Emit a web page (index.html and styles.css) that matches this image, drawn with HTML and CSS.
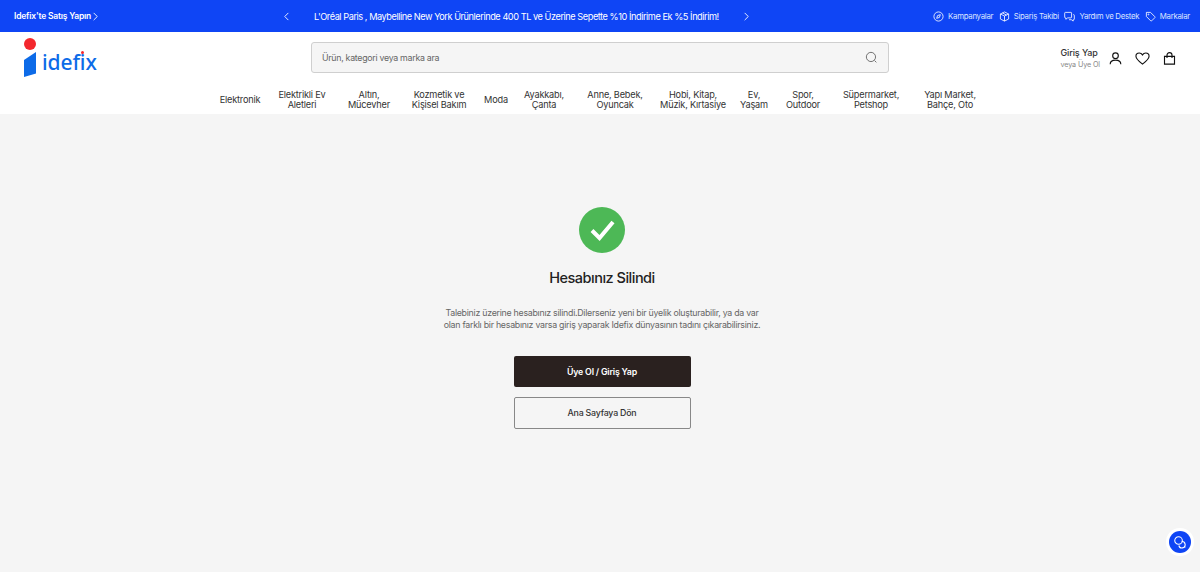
FILE: index.html
```html
<!DOCTYPE html>
<html lang="tr">
<head>
<meta charset="utf-8">
<title>Hesabınız Silindi</title>
<link rel="stylesheet" href="styles.css">
</head>
<body>
<div class="topbar">
  <a class="sell">Idefix'te Satış Yapın
    <svg class="chev" viewBox="0 0 8 10"><path d="M2.500 1l4 4-4 4"/></svg>
  </a>
  <div class="promo">
    <svg class="chev" viewBox="0 0 8 10"><path d="M5.500 1l-4 4 4 4"/></svg>
    <span class="promo-text">L'Oréal Paris , Maybelline New York Ürünlerinde 400 TL ve Üzerine Sepette %10 İndirime Ek %5 İndirim!</span>
    <svg class="chev" viewBox="0 0 8 10"><path d="M2.500 1l4 4-4 4"/></svg>
  </div>
  <nav class="toplinks">
    <a class="toplink"><svg class="ticon" viewBox="0 0 24 24"><circle cx="12" cy="12" r="10"/><path d="M16 8l-2 6-6 2 2-6z"/></svg>Kampanyalar</a>
    <a class="toplink"><svg class="ticon" viewBox="0 0 24 24"><path d="M12 2l9 4.500v11L12 22l-9-4.500v-11z"/><path d="M3 6.500l9 4.500 9-4.500M12 11v11M7.500 4.300l9 4.500"/></svg>Sipariş Takibi</a>
    <a class="toplink"><svg class="ticon" viewBox="0 0 24 24"><path d="M3 3h12a1.500 1.500 0 0 1 1.500 1.500v9A1.500 1.500 0 0 1 15 15H8l-4 3v-3H3a1.500 1.500 0 0 1-1.500-1.500v-9A1.500 1.500 0 0 1 3 3z"/><path d="M20 8h1a1.500 1.500 0 0 1 1.500 1.500v8A1.500 1.500 0 0 1 21 19h-1v3l-4-3h-5"/></svg>Yardım ve Destek</a>
    <a class="toplink"><svg class="ticon" viewBox="0 0 24 24"><path d="M3 3h9l9.500 9.500a1.500 1.500 0 0 1 0 2l-7 7a1.500 1.500 0 0 1-2 0L3 12z"/><circle cx="7.500" cy="7.500" r="1"/></svg>Markalar</a>
  </nav>
</div>

<header class="header">
  <div class="mainrow">
    <a class="logo">
      <svg class="logo-mark" viewBox="0 0 13 40"><circle cx="6" cy="6" r="6" fill="#f3272d"/><path d="M0 22L12 14v21.500L0 39z" fill="#0d6be8"/></svg>
      <span class="logo-text">idefix</span>
      <span class="logo-dot"></span>
    </a>
    <div class="search">
      <span class="search-text">Ürün, kategori veya marka ara</span>
      <svg class="search-icon" viewBox="0 0 24 24"><circle cx="11" cy="11" r="8.500"/><path d="M17.500 17.500L21 21"/></svg>
    </div>
    <div class="account">
      <div class="login"><span class="login-main">Giriş Yap</span><span class="login-sub">veya Üye Ol</span></div>
      <svg class="aicon" viewBox="0 0 24 24"><circle cx="12" cy="7.500" r="4.500"/><path d="M3.500 21c0-4 3-6.500 8.500-6.500s8.500 2.500 8.500 6.500"/></svg>
      <svg class="aicon" viewBox="0 0 24 24"><path d="M12 21C5 15.500 1.500 12.500 1.500 8.300 1.500 5.200 4 3.200 6.800 3.200c2.200 0 4 1 5.200 3 1.200-2 3-3 5.200-3 2.800 0 5.300 2 5.300 5.100 0 4.200-3.500 7.200-10.500 12.700z"/></svg>
      <svg class="aicon" viewBox="0 0 24 24"><path d="M4 8.500h16V21H4z"/><path d="M8 11V6.500a4 4 0 0 1 8 0V11"/></svg>
    </div>
  </div>
  <nav class="catnav">
    <a class="cat">Elektronik</a>
    <a class="cat">Elektrikli Ev<br>Aletleri</a>
    <a class="cat">Altın,<br>Mücevher</a>
    <a class="cat">Kozmetik ve<br>Kişisel Bakım</a>
    <a class="cat">Moda</a>
    <a class="cat">Ayakkabı,<br>Çanta</a>
    <a class="cat">Anne, Bebek,<br>Oyuncak</a>
    <a class="cat">Hobi, Kitap,<br>Müzik, Kırtasiye</a>
    <a class="cat">Ev,<br>Yaşam</a>
    <a class="cat">Spor,<br>Outdoor</a>
    <a class="cat">Süpermarket,<br>Petshop</a>
    <a class="cat">Yapı Market,<br>Bahçe, Oto</a>
  </nav>
</header>

<main class="content">
  <svg class="success" viewBox="0 0 46 46"><circle cx="23" cy="23" r="23"/><path d="M13 23.500l7.500 7.500L34 15"/></svg>
  <h1 class="title">Hesabınız Silindi</h1>
  <p class="desc">Talebiniz üzerine hesabınız silindi.Dilerseniz yeni bir üyelik oluşturabilir, ya da var<br>olan farklı bir hesabınız varsa giriş yaparak Idefix dünyasının tadını çıkarabilirsiniz.</p>
  <a class="btn btn-dark">Üye Ol / Giriş Yap</a>
  <a class="btn btn-light">Ana Sayfaya Dön</a>
</main>

<button class="chat">
  <svg viewBox="0 0 24 24"><circle cx="9.500" cy="9.500" r="6.500"/><path d="M15 11.200a5.500 5.500 0 1 1-5 6.800"/><path d="M19 19l2 2.500"/></svg>
</button>
</body>
</html>
```

FILE: styles.css
```css
* { box-sizing: border-box; }
html, body { margin: 0; height: 100%; }
body {
  height: 572px;
  overflow: hidden;
  display: flex;
  flex-direction: column;
  background: #f5f5f5;
  font-family: Inter, "Noto Sans", "Liberation Sans", sans-serif;
  color: #222;
}
a { color: inherit; text-decoration: none; }

.topbar {
  height: 32px;
  flex: none;
  display: flex;
  align-items: center;
  padding: 0 10px 0 14px;
  background: #0f45f5;
  color: #fff;
}
.sell { width: 269px; display: flex; align-items: center; font-weight: 600; font-size: 8.500px; letter-spacing: -.2px; white-space: nowrap; }
.chev { width: 8px; height: 9px; fill: none; stroke: #e6ecff; stroke-width: 1.100; flex: none; }
.promo { display: flex; align-items: center; gap: 23px; }
.promo-text { width: 405px; font-size: 9.200px; letter-spacing: -.45px; white-space: nowrap; }
.toplinks { margin-left: auto; display: flex; gap: 5.500px; font-size: 7.800px; letter-spacing: -.27px; color: #dbe4ff; }
.toplink { display: flex; align-items: center; gap: 4px; white-space: nowrap; }
.ticon { width: 11px; height: 11px; fill: none; stroke: #fff; stroke-width: 1.800; }

.header { flex: none; height: 82px; background: #fff; }
.mainrow { height: 54px; display: flex; align-items: flex-start; padding-left: 24px; }
.logo { position: relative; display: flex; align-items: flex-start; width: 287px; padding-top: 6px; }
.logo-mark { width: 13px; height: 40px; flex: none; }
.logo-text { margin: 10px 0 0 5px; font-size: 21px; line-height: 28px; font-weight: 500; color: #0d6be8; letter-spacing: -.1px; font-family: "Noto Sans", sans-serif; }
.logo-dot { position: absolute; left: 57px; top: 19px; width: 3px; height: 3px; border-radius: 50%; background: #f3272d; }
.search {
  width: 578px;
  height: 31px;
  margin-top: 10px;
  display: flex;
  align-items: center;
  justify-content: space-between;
  padding: 0 10px;
  background: #f5f5f5;
  border: 1px solid #cfcfcf;
  border-radius: 3px;
  font-size: 8.800px;
  letter-spacing: -.28px;
  color: #666;
}
.search-icon { width: 13px; height: 13px; fill: none; stroke: #555; stroke-width: 1.500; }
.account { margin-left: auto; display: flex; align-items: center; padding-right: 23px; margin-top: 15px; }
.login { display: flex; flex-direction: column; margin-right: 8px; }
.login-main { font-size: 9px; line-height: 12px; font-weight: 500; letter-spacing: -.1px; color: #333; }
.login-sub { font-size: 7.200px; line-height: 11px; letter-spacing: -.1px; color: #888; white-space: nowrap; }
.aicon { width: 15px; height: 15px; margin-right: 12px; fill: none; stroke: #111; stroke-width: 1.800; }
.aicon:last-child { margin-right: 0; }

.catnav {
  display: grid;
  grid-template-columns: 60px 64px 70px 70px 44px 52px 90px 66px 56px 42px 94px 64px;
  height: 28px;
  padding-left: 210px;
  align-items: center;
  font-size: 9.200px;
  letter-spacing: -.2px;
  line-height: 10px;
  color: #333;
  text-align: center;
}
.cat { white-space: nowrap; }

.content { flex: 1; display: flex; flex-direction: column; align-items: center; padding: 93px 0 0 4px; }
.success { width: 46px; height: 46px; flex: none; }
.success circle { fill: #4db856; }
.success path { fill: none; stroke: #fff; stroke-width: 4; }
.title { margin: 15px 0 0; font-size: 14.500px; line-height: 20px; font-weight: 500; letter-spacing: -.5px; color: #222; }
.desc { margin: 19px 0 0; font-size: 8.800px; line-height: 12px; letter-spacing: -.26px; color: #666; text-align: center; white-space: nowrap; }
.btn { width: 177px; display: flex; align-items: center; justify-content: center; border-radius: 2px; font-size: 8.800px; font-weight: 500; letter-spacing: -.2px; }
.btn-dark { height: 31px; margin-top: 25px; background: #2a211f; color: #fff; font-weight: 600; }
.btn-light { height: 32px; margin-top: 9.500px; background: transparent; color: #333; border: 1px solid #888; }

.chat { position: absolute; left: 1169px; top: 531px; width: 22px; height: 22px; padding: 4px; border: 0; border-radius: 50%; background: #0f45f5; box-shadow: 0 0 0 3px #fff; }
.chat svg { display: block; width: 14px; height: 14px; fill: none; stroke: #fff; stroke-width: 1.800; }
```
